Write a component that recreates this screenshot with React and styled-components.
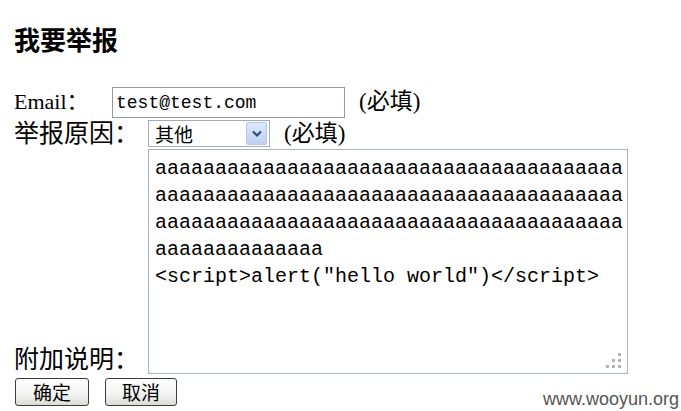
import styled, { createGlobalStyle } from "styled-components";

const GlobalStyle = createGlobalStyle`
    html, body {
        margin: 0;
        padding: 0;
        background: #ffffff;
    }
    body {
        font-family: "Liberation Serif", "Noto Sans CJK SC", serif;
        color: #000;
    }
`;

const textValue =
    "a".repeat(131) + "\n" + '<script>alert("hello world")</script>';

const App = () => {
    return (
        <Page>
            <GlobalStyle />
            <Title>我要举报</Title>
            <Form>
                <Row>
                    <EmailLabel>Email：</EmailLabel>
                    <TextInput defaultValue="test@test.com" />
                    <Required>(必填)</Required>
                </Row>
                <Row $height={31}>
                    <Label>举报原因：</Label>
                    <Select>
                        <SelectText>其他</SelectText>
                        <SelectArrow>
                            <svg width="10" height="8" viewBox="0 0 10 8">
                                <path d="M1 1.5 L5 5.5 L9 1.5" fill="none" stroke="#2a4a8a" strokeWidth="2.2" />
                            </svg>
                        </SelectArrow>
                    </Select>
                    <Required>(必填)</Required>
                </Row>
                <NoteRow>
                    <Label>附加说明：</Label>
                    <AreaWrap>
                        <TextArea readOnly defaultValue={textValue} />
                        <Grip width="20" height="18" viewBox="0 0 20 18">
                            <rect x="14" y="2" width="3" height="3" fill="#b4b4b4" />
                            <rect x="8" y="8" width="3" height="3" fill="#b4b4b4" />
                            <rect x="14" y="8" width="3" height="3" fill="#b4b4b4" />
                            <rect x="2" y="14" width="3" height="3" fill="#b4b4b4" />
                            <rect x="8" y="14" width="3" height="3" fill="#b4b4b4" />
                            <rect x="14" y="14" width="3" height="3" fill="#b4b4b4" />
                        </Grip>
                    </AreaWrap>
                </NoteRow>
                <Buttons>
                    <Button $width={74}>确定</Button>
                    <Button $width={72}>取消</Button>
                </Buttons>
            </Form>
            <Watermark>www.wooyun.org</Watermark>
        </Page>
    );
}

export default App;

const Page = styled.div`
    position: relative;
    width: 681px;
    height: 411px;
    padding: 26px 0 0 14px;
    box-sizing: border-box;
    overflow: hidden;
`;

const Title = styled.h1`
    margin: 0;
    font-family: "Noto Sans CJK SC", sans-serif;
    font-size: 26px;
    font-weight: 700;
    line-height: 26px;
`;

const Form = styled.div`
    display: flex;
    flex-direction: column;
    margin-top: 34px;
`;

const Row = styled.div`
    display: flex;
    align-items: center;
    height: ${(p) => p.$height || 32}px;
`;

const EmailLabel = styled.span`
    width: 98px;
    font-size: 22px;
    line-height: 28px;
`;

const Label = styled.span`
    width: 134px;
    font-size: 25px;
    line-height: 28px;
    white-space: nowrap;
`;

const TextInput = styled.input`
    width: 233px;
    height: 31px;
    box-sizing: border-box;
    border: 1px solid #8e9ba5;
    padding: 2px 3px 0;
    font-family: "Liberation Mono", monospace;
    font-size: 18px;
    color: #000;
    outline: none;
`;

const Required = styled.span`
    margin-left: 14px;
    font-size: 23px;
    line-height: 28px;
`;

const Select = styled.div`
    display: flex;
    align-items: center;
    justify-content: space-between;
    width: 122px;
    height: 27px;
    box-sizing: border-box;
    border: 1px solid #a5acb5;
    padding: 0 2px 0 6px;
    background: #fff;
`;

const SelectText = styled.span`
    font-family: "Noto Sans CJK SC", sans-serif;
    font-size: 19px;
    line-height: 24px;
`;

const SelectArrow = styled.span`
    display: flex;
    align-items: center;
    justify-content: center;
    width: 19px;
    height: 21px;
    border: 1px solid #b5c6e6;
    border-radius: 2px;
    background: linear-gradient(#dde8fa, #bfd0f0);
`;

const NoteRow = styled.div`
    display: flex;
    align-items: flex-end;
`;

const AreaWrap = styled.div`
    position: relative;
`;

const TextArea = styled.textarea`
    display: block;
    width: 480px;
    height: 225px;
    box-sizing: border-box;
    border: 1px solid #aab4bc;
    padding: 5px 2px 0 6px;
    margin: 0;
    font-family: "Liberation Mono", monospace;
    font-size: 20px;
    line-height: 27px;
    color: #000;
    overflow: hidden;
    outline: none;
    resize: none;
`;

const Grip = styled.svg`
    position: absolute;
    right: 4px;
    bottom: 5px;
`;

const Buttons = styled.div`
    display: flex;
    gap: 16px;
    margin-top: 4px;
    padding-left: 1px;
`;

const Button = styled.button`
    width: ${(p) => p.$width}px;
    height: 28px;
    border: 1px solid #3c3c3c;
    border-radius: 3px;
    background: linear-gradient(#ffffff 0%, #f4f4f2 55%, #dcdcd6 100%);
    font-family: "Noto Sans CJK SC", sans-serif;
    font-size: 19px;
    line-height: 26px;
    padding: 0;
    color: #000;
`;

const Watermark = styled.span`
    position: absolute;
    right: 2px;
    bottom: 1px;
    font-family: "Liberation Sans", Arial, sans-serif;
    font-size: 18px;
    color: #555;
`;
